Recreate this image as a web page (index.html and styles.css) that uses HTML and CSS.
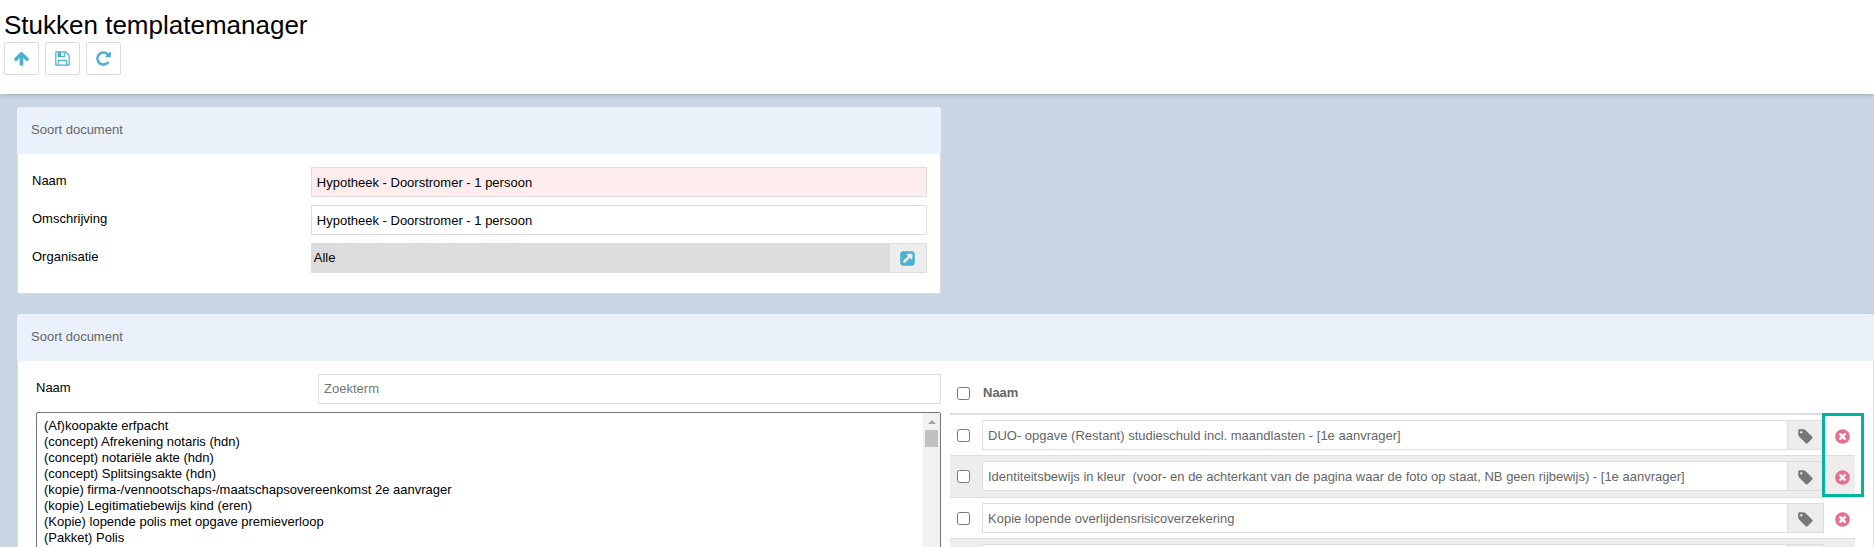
FILE: index.html
```html
<!DOCTYPE html>
<html lang="nl">
<head>
<meta charset="utf-8">
<title>Stukken templatemanager</title>
<link rel="stylesheet" href="styles.css">
</head>
<body>
<svg class="sprite" aria-hidden="true">
  <symbol id="arrow-up" viewBox="0 0 1792 1792"><path d="M1675 971q0 51-37 90l-75 75q-38 38-91 38-54 0-90-38l-294-293v704q0 52-37.5 84.5t-90.5 32.5h-128q-53 0-90.5-32.5t-37.5-84.5v-704l-294 293q-36 38-90 38t-90-38l-75-75q-38-38-38-90 0-53 38-91l651-651q35-37 90-37 54 0 91 37l651 651q37 39 37 91z"/></symbol>
  <symbol id="floppy" viewBox="0 0 1792 1792"><path d="M512 1536h768v-384h-768v384zm896 0h128v-896q0-14-10-38.5t-20-34.5l-281-281q-10-10-34-20t-39-10v416q0 40-28 68t-68 28h-576q-40 0-68-28t-28-68v-416h-128v1280h128v-416q0-40 28-68t68-28h832q40 0 68 28t28 68v416zm-384-928v-320q0-13-9.5-22.5t-22.5-9.5h-192q-13 0-22.5 9.5t-9.5 22.5v320q0 13 9.5 22.5t22.5 9.5h192q13 0 22.5-9.5t9.5-22.5zm640 32v928q0 40-28 68t-68 28h-1344q-40 0-68-28t-28-68v-1344q0-40 28-68t68-28h928q40 0 88 20t76 48l280 280q28 28 48 76t20 88z"/></symbol>
  <symbol id="repeat" viewBox="0 0 1792 1792"><path d="M1664 256v448q0 26-19 45t-45 19h-448q-42 0-59-40-17-39 14-69l138-138q-148-137-349-137-104 0-198.5 40.5t-163.5 109.5-109.5 163.5-40.5 198.5 40.5 198.5 109.5 163.5 163.5 109.5 198.5 40.5q119 0 225-52t179-147q7-10 23-12 15 0 25 9l137 138q9 8 9.5 20.5t-7.5 22.5q-109 132-264 204.5t-327 72.5q-156 0-298-61t-245-164-164-245-61-298 61-298 164-245 245-164 298-61q147 0 284.5 55.5t244.5 156.5l130-129q29-31 70-14 39 17 39 59z"/></symbol>
  <symbol id="external" viewBox="0 0 1792 1792"><path d="M1408 928v-480q0-26-19-45t-45-19h-480q-42 0-59 39-17 41 14 70l144 144-534 534q-19 19-19 45t19 45l102 102q19 19 45 19t45-19l534-534 144 144q18 19 45 19 12 0 25-5 39-17 39-59zm256-512v960q0 119-84.5 203.5t-203.5 84.5h-960q-119 0-203.5-84.5t-84.5-203.5v-960q0-119 84.5-203.5t203.5-84.5h960q119 0 203.5 84.5t84.5 203.5z"/></symbol>
  <symbol id="tag" viewBox="0 0 1792 1792"><path d="M576 448q0-53-37.5-90.5t-90.5-37.5-90.5 37.5-37.5 90.5 37.5 90.5 90.5 37.5 90.5-37.5 37.5-90.5zm1067 576q0 53-37 90l-491 492q-39 37-91 37-53 0-90-37l-715-716q-38-37-64.5-101t-26.5-117v-416q0-52 38-90t90-38h416q53 0 117 26.5t102 64.5l715 714q37 39 37 91z"/></symbol>
  <symbol id="times-circle" viewBox="0 0 1792 1792"><path d="M1277 1122q0-26-19-45l-181-181 181-181q19-19 19-45 0-27-19-46l-90-90q-19-19-46-19-26 0-45 19l-181 181-181-181q-19-19-45-19-27 0-46 19l-90 90q-19 19-19 46 0 26 19 45l181 181-181 181q-19 19-19 45 0 27 19 46l90 90q19 19 46 19 26 0 45-19l181-181 181 181q19 19 45 19 27 0 46-19l90-90q19-19 19-46zm387-226q0 209-103 385.5t-279.5 279.5-385.5 103-385.5-103-279.5-279.5-103-385.5 103-385.5 279.5-279.5 385.5-103 385.5 103 279.5 279.5 103 385.5z"/></symbol>
</svg>

<header class="topbar">
  <h1 class="title">Stukken templatemanager</h1>
  <div class="toolbar">
    <button class="tool" type="button" aria-label="Omhoog"><svg class="icon"><use href="#arrow-up"/></svg></button>
    <button class="tool" type="button" aria-label="Opslaan"><svg class="icon"><use href="#floppy"/></svg></button>
    <button class="tool" type="button" aria-label="Vernieuwen"><svg class="icon"><use href="#repeat"/></svg></button>
  </div>
</header>

<main class="content">
  <section class="panel panel-half">
    <h2 class="panel-head">Soort document</h2>
    <div class="panel-body form">
      <div class="field">
        <label for="naam">Naam</label>
        <input class="input required" id="naam" type="text" value="Hypotheek - Doorstromer - 1 persoon">
      </div>
      <div class="field">
        <label for="omschrijving">Omschrijving</label>
        <input class="input" id="omschrijving" type="text" value="Hypotheek - Doorstromer - 1 persoon">
      </div>
      <div class="field">
        <label for="organisatie">Organisatie</label>
        <div class="group">
          <input class="input readonly" id="organisatie" type="text" value="Alle" readonly>
          <button class="addon addon-link" type="button" aria-label="Organisatie openen"><svg class="icon"><use href="#external"/></svg></button>
        </div>
      </div>
    </div>
  </section>

  <section class="panel">
    <h2 class="panel-head">Soort document</h2>
    <div class="panel-body columns">
      <div class="source">
        <div class="field">
          <label for="zoek">Naam</label>
          <input class="input search" id="zoek" type="text" placeholder="Zoekterm">
        </div>
        <div class="listbox">
          <select class="options" multiple size="20" aria-label="Documenten">
            <option>(Af)koopakte erfpacht</option>
            <option>(concept) Afrekening notaris (hdn)</option>
            <option>(concept) notariële akte (hdn)</option>
            <option>(concept) Splitsingsakte (hdn)</option>
            <option>(kopie) firma-/vennootschaps-/maatschapsovereenkomst 2e aanvrager</option>
            <option>(kopie) Legitimatiebewijs kind (eren)</option>
            <option>(Kopie) lopende polis met opgave premieverloop</option>
            <option>(Pakket) Polis</option>
          </select>
          <div class="scrollbar" aria-hidden="true">
            <svg class="scroll-arrow" viewBox="0 0 8 4"><path d="M0 4 4 0l4 4z"/></svg>
            <div class="scroll-thumb"></div>
          </div>
        </div>
      </div>

      <div class="chosen">
        <table class="table">
          <thead>
            <tr>
              <th class="col-check"><input class="check" type="checkbox" aria-label="Alles selecteren"></th>
              <th class="col-name">Naam</th>
              <th class="col-delete"></th>
            </tr>
          </thead>
          <tbody>
            <tr>
              <td><input class="check" type="checkbox" aria-label="Selecteer document 1"></td>
              <td><div class="group"><input class="input" type="text" aria-label="Document 1" value="DUO- opgave (Restant) studieschuld incl. maandlasten - [1e aanvrager]"><button class="addon" type="button" aria-label="Label"><svg class="icon"><use href="#tag"/></svg></button></div></td>
              <td><button class="delete" type="button" aria-label="Verwijderen"><svg class="icon"><use href="#times-circle"/></svg></button></td>
            </tr>
            <tr>
              <td><input class="check" type="checkbox" aria-label="Selecteer document 2"></td>
              <td><div class="group"><input class="input" type="text" aria-label="Document 2" value="Identiteitsbewijs in kleur  (voor- en de achterkant van de pagina waar de foto op staat, NB geen rijbewijs) - [1e aanvrager]"><button class="addon" type="button" aria-label="Label"><svg class="icon"><use href="#tag"/></svg></button></div></td>
              <td><button class="delete" type="button" aria-label="Verwijderen"><svg class="icon"><use href="#times-circle"/></svg></button></td>
            </tr>
            <tr>
              <td><input class="check" type="checkbox" aria-label="Selecteer document 3"></td>
              <td><div class="group"><input class="input" type="text" aria-label="Document 3" value="Kopie lopende overlijdensrisicoverzekering"><button class="addon" type="button" aria-label="Label"><svg class="icon"><use href="#tag"/></svg></button></div></td>
              <td><button class="delete" type="button" aria-label="Verwijderen"><svg class="icon"><use href="#times-circle"/></svg></button></td>
            </tr>
            <tr>
              <td><input class="check" type="checkbox" aria-label="Selecteer document 4"></td>
              <td><div class="group"><input class="input" type="text" aria-label="Document 4"><button class="addon" type="button" aria-label="Label"><svg class="icon"><use href="#tag"/></svg></button></div></td>
              <td><button class="delete" type="button" aria-label="Verwijderen"><svg class="icon"><use href="#times-circle"/></svg></button></td>
            </tr>
          </tbody>
        </table>
        <div class="highlight"></div>
      </div>
    </div>
  </section>
</main>
</body>
</html>
```
FILE: styles.css
```css
*, *::before, *::after { box-sizing: border-box; }

html { height: 100%; overflow: hidden; }

body {
  margin: 0;
  height: 100%;
  overflow: hidden;
  background: #c9d5e3;
  color: #000;
  font: 13px/16px "Liberation Sans", Arial, sans-serif;
}

input, button, select { margin: 0; font: inherit; color: inherit; }

.sprite { display: none; }

.icon { display: block; width: 17px; height: 17px; fill: currentColor; }

.topbar {
  position: relative;
  padding: 9px 4px 19px;
  background: #fff;
  box-shadow: 0 1px 5px rgba(0, 0, 0, 0.2);
}

.title { margin: 0; font-size: 26px; line-height: 33px; font-weight: 400; }

.toolbar { display: flex; gap: 6px; }

.tool {
  display: flex;
  align-items: center;
  justify-content: center;
  width: 35px;
  height: 33px;
  padding: 0;
  border: 1px solid #ddd;
  border-radius: 2px;
  background: #fff;
  color: #4bb0d1;
}

.content { display: flex; flex-direction: column; gap: 20px; padding: 13px 0 0 17px; }

.panel { border-radius: 3px; }

.panel-half { width: calc(50% - 5px); }

.panel-head {
  margin: 0;
  padding: 15px 14px 16px;
  border-radius: 3px 3px 0 0;
  background: #eaf1fa;
  color: #666;
  font-size: 13px;
  line-height: 16px;
  font-weight: 400;
}

.panel-body {
  border: 1px solid #ddd;
  border-top: 0;
  border-radius: 0 0 3px 3px;
  background: #fff;
}

.form { display: grid; gap: 8px; padding: 13px 13px 20px 14px; }

.field { display: grid; grid-template-columns: 24fr 53fr; align-items: center; }

.field label { padding-bottom: 2px; }

.input {
  width: 100%;
  min-width: 0;
  height: 30px;
  padding: 1px 5px;
  border: 1px solid #ddd;
  border-radius: 0;
  background: #fff;
}

.search { padding-bottom: 3px; }

.input::placeholder { color: #757575; opacity: 1; }

.required { background: #ffeded; }

.readonly { padding: 1px 2px 3px; background: #dcdcdc; }

.group { display: flex; }

.group .input { flex: 1; border-right: 0; }

.addon {
  display: flex;
  align-items: center;
  justify-content: center;
  flex: none;
  width: 37px;
  height: 30px;
  padding: 2px 0 0;
  border: 1px solid #ddd;
  background: #ededed;
  color: #777;
}

.addon-link { padding: 0; border-left: 0; color: #4bb0d1; }

.columns { display: grid; grid-template-columns: 1fr 1fr; gap: 9px; padding: 13px 18px; }

.source { display: grid; gap: 8px; align-content: start; }

.listbox {
  display: flex;
  border: 1px solid #767676;
  border-radius: 2px;
  background: #fff;
}

.options {
  flex: 1;
  min-width: 0;
  height: 330px;
  padding: 5px;
  border: 0;
  outline: 0;
  background: transparent;
  overflow: hidden;
}

.options option { min-height: 16px; padding: 0 2px; line-height: 16px; }

.scrollbar {
  display: flex;
  flex-direction: column;
  align-items: center;
  gap: 6px;
  width: 17px;
  padding-top: 7px;
  background: #f1f1f1;
}

.scroll-arrow { width: 8px; height: 4px; fill: #a3a3a3; }

.scroll-thumb { width: 13px; height: 17px; background: #c1c1c1; }

.chosen { position: relative; }

.table { width: 100%; border-collapse: separate; border-spacing: 0; table-layout: fixed; color: #666; }

.table th {
  height: 41px;
  padding: 0;
  border-bottom: 2px solid #ddd;
  text-align: left;
  font-weight: 700;
}

.table .col-check { width: 32px; padding: 0 0 0 7px; }

.table .col-name { padding: 0 1px 2px; }

.table .col-delete { width: 31px; }

.table td { padding: 5px 0; border-bottom: 1px solid #ddd; }

.table td:first-child { padding-left: 7px; }

.table tr:nth-child(even) td { padding-bottom: 6px; background: #ededed; }

.check { display: block; width: 13px; height: 13px; }

.delete {
  display: flex;
  align-items: center;
  width: 100%;
  height: 30px;
  padding: 2px 0 0 10px;
  border: 0;
  background: none;
  color: #e7708f;
}

.highlight {
  position: absolute;
  top: 39px;
  right: -9px;
  width: 42px;
  height: 84px;
  border: 3px solid #00b59c;
  pointer-events: none;
}
```
